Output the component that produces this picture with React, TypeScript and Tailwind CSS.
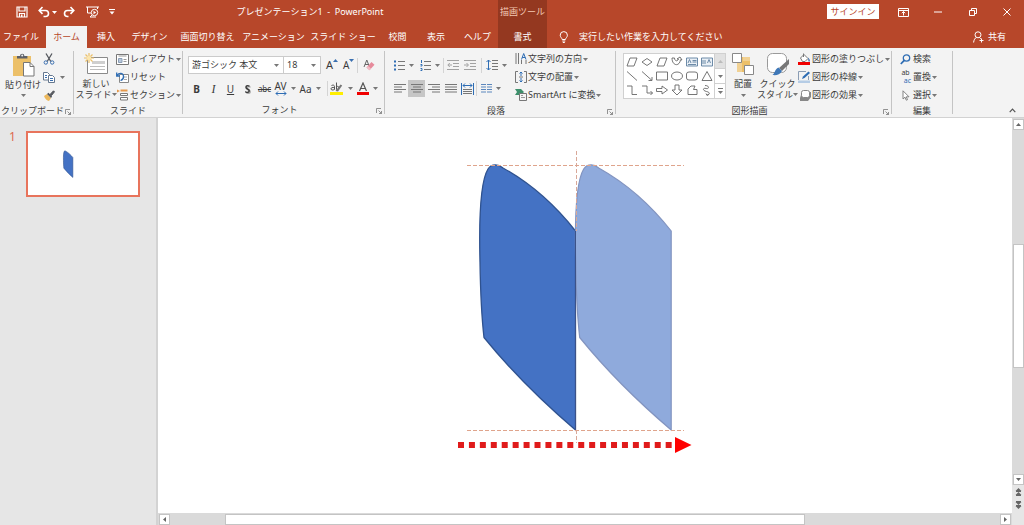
import React from "react";

type Kids = { children: React.ReactNode };

const Caret = ({ className = "" }: { className?: string }) => (
  <svg width="5" height="3" viewBox="0 0 5 3" className={`shrink-0 ${className}`} aria-hidden="true">
    <path d="M0 0h5L2.5 3z" fill="currentColor" />
  </svg>
);

function Icon({ w, h, children, className = "" }: Kids & { w: number; h: number; className?: string }) {
  return (
    <svg width={w} height={h} viewBox={`0 0 ${w} ${h}`} fill="none" className={`shrink-0 ${className}`} aria-hidden="true">
      {children}
    </svg>
  );
}

function Group({ label, width, launcher, children }: Kids & { label: string; width: string; launcher?: boolean }) {
  return (
    <section aria-label={label} className={`flex h-full shrink-0 ${width}`}>
      <div className="flex min-w-0 flex-1 flex-col">
        <div className="flex h-14 pt-[2px]">{children}</div>
        <div className="flex h-[14px] items-center">
          <span className="flex-1 text-center whitespace-nowrap">{label}</span>
          {launcher && (
            <button type="button" aria-label={`${label}の設定`} className="w-2 pt-[2px]">
              <Icon w={6} h={6}>
                <path d="M.5 5V.5H5M2.5 2.5l3 3M5.5 3v2.5H3" stroke="#777" strokeWidth=".8" />
              </Icon>
            </button>
          )}
        </div>
      </div>
      <div className="my-[3px] w-px bg-[#c4c4c4]" />
    </section>
  );
}

function SmallButton({ icon, text, caret }: { icon: React.ReactNode; text: string; caret?: boolean }) {
  return (
    <button type="button" className="flex h-[18px] items-center gap-px whitespace-nowrap">
      <span className="flex w-[13px] justify-center">{icon}</span>
      <span>{text}</span>
      {caret && <Caret className="text-[#777]" />}
    </button>
  );
}

function Tool({ label, width = "w-[17px]", caret, active, children }: Kids & { label: string; width?: string; caret?: boolean; active?: boolean }) {
  return (
    <button
      type="button"
      aria-label={label}
      className={`flex h-[17px] shrink-0 items-center justify-center ${caret ? "gap-1" : ""} ${width} ${active ? "bg-[#c6c6c6]" : ""}`}
    >
      {children}
      {caret && <Caret className="text-[#777]" />}
    </button>
  );
}

const Divider = () => <span className="h-[15px] w-px shrink-0 bg-[#d4d4d4]" />;

const Lines = ({ d }: { d: string }) => (
  <Icon w={12} h={9}>
    <path d={d} stroke="#777" />
  </Icon>
);

const tabs = [
  { text: "ファイル", width: "w-[42px] mr-1" },
  { text: "ホーム", width: "w-[41px]", active: true },
  { text: "挿入", width: "w-[38px]" },
  { text: "デザイン", width: "w-[49px]" },
  { text: "画面切り替え", width: "w-[67px]" },
  { text: "アニメーション", width: "w-[65px]" },
  { text: "スライド ショー", width: "w-[74px]" },
  { text: "校閲", width: "w-[35px]" },
  { text: "表示", width: "w-[42px]" },
  { text: "ヘルプ", width: "w-[41px]" },
];

function Header() {
  return (
    <header className="shrink-0 bg-[#b7472a] text-white">
      <div className="flex h-6">
        <div className="flex w-[498px] shrink-0 items-center">
          <div className="flex w-[122px] items-center pl-4">
            <button type="button" aria-label="上書き保存" className="w-[22px]">
              <Icon w={12} h={12}>
                <path d="M1 1h10v10H1zM3 1.5v3.5h6V1.5M3.5 11V7.5h5V11" stroke="#fff" strokeWidth="1.2" />
                <path d="M5 8.5h1.5V11H5z" fill="#fff" />
              </Icon>
            </button>
            <button type="button" aria-label="元に戻す" className="flex w-[25px] items-center gap-[2px]">
              <Icon w={12} h={12}>
                <path d="M1.5 4.5h6a3 3 0 0 1 0 6H5.5M4.5 1 1.2 4.5l3.3 3.4" stroke="#fff" strokeWidth="1.6" />
              </Icon>
              <Caret />
            </button>
            <button type="button" aria-label="やり直し" className="w-[23px]">
              <Icon w={12} h={12}>
                <path d="M10.5 4.5h-6a3 3 0 0 0 0 6h1M7.5 1l3.3 3.5-3.3 3.4" stroke="#fff" strokeWidth="1.6" />
              </Icon>
            </button>
            <button type="button" aria-label="先頭から開始" className="w-[23px]">
              <Icon w={13} h={12}>
                <path d="M0 1h13M1.5 1v6H5M4 11l2-2M11.500 1v2" stroke="#fff" />
                <circle cx="8.500" cy="6.500" r="3.200" stroke="#fff" />
                <path d="M7.500 4.800v3.400l2.600-1.700zM4 11.500h6v-1H4z" fill="#fff" />
              </Icon>
            </button>
            <button type="button" aria-label="クイック アクセスのカスタマイズ">
              <Icon w={6} h={6}>
                <path d="M0 .5h6" stroke="#fff" />
                <path d="M.5 2.500h5L3 5.500z" fill="#fff" />
              </Icon>
            </button>
          </div>
          <h1 className="flex-1 whitespace-pre text-center">プレゼンテーション1  -  PowerPoint</h1>
        </div>
        <div className="flex w-[49px] shrink-0 items-center justify-center bg-[#943820] text-[#f3c9b4]">描画ツール</div>
        <div className="flex-1" />
        <button type="button" className="mt-1 mr-[7px] h-[15px] w-[52px] bg-white text-[#b7472a]">サインイン</button>
        <button type="button" aria-label="リボンの表示オプション" className="flex w-[35px] items-center justify-center">
          <Icon w={11} h={9}>
            <path d="M.5.5h10v8H.5zM.5 2.500h10M5.500 7.500v-4M3.800 5.200l1.700-1.700 1.700 1.700" stroke="#fff" />
          </Icon>
        </button>
        <button type="button" aria-label="最小化" className="flex w-[34px] items-center justify-center">
          <Icon w={8} h={2}><path d="M0 1h8" stroke="#fff" /></Icon>
        </button>
        <button type="button" aria-label="元のサイズに戻す" className="flex w-[35px] items-center justify-center">
          <Icon w={8} h={8}><path d="M.5 2.500h5v5h-5zM2.500 2.500v-2h5v5h-2" stroke="#fff" /></Icon>
        </button>
        <button type="button" aria-label="閉じる" className="flex w-[34px] items-center justify-center">
          <Icon w={8} h={8}><path d="M.5.5l7 7M7.500.5l-7 7" stroke="#fff" /></Icon>
        </button>
      </div>
      <div className="flex h-6">
        <nav className="flex shrink-0" aria-label="リボン タブ">
          {tabs.map((t) => (
            <button
              key={t.text}
              type="button"
              className={`mt-[2px] shrink-0 whitespace-nowrap ${t.width} ${t.active ? "bg-[#f3f3f3] text-[#b7472a]" : ""}`}
            >
              {t.text}
            </button>
          ))}
          <button type="button" className="w-[49px] bg-[#943820] pt-[2px]">書式</button>
        </nav>
        <label className="flex items-center pt-[2px] pl-3">
          <Icon w={10} h={12}>
            <path d="M3.200 8.500C3 7 1.200 6.200 1.200 4.200a3.600 3.600 0 0 1 7.200 0c0 2-1.800 2.800-2 4.300zM3.300 10h3M3.800 11.500h2" stroke="#fff" />
          </Icon>
          <input
            aria-label="操作アシスト"
            placeholder="実行したい作業を入力してください"
            className="ml-[10px] w-[160px] bg-transparent outline-none placeholder:text-white placeholder:opacity-100"
          />
        </label>
        <div className="flex-1" />
        <button type="button" className="mr-[18px] flex items-center gap-1 pt-[2px]">
          <Icon w={11} h={12}>
            <circle cx="5" cy="3.800" r="3" stroke="#fff" />
            <path d="M.6 11.500c.2-2.500 1.400-4.500 3-5.200M6.300 6.300l1.500 1.500M8.500 7.500v4M6.500 9.500h4" stroke="#fff" />
          </Icon>
          共有
        </button>
      </div>
    </header>
  );
}

function ClipboardGroup() {
  return (
    <Group label="クリップボード" width="w-[74px]" launcher>
      <button type="button" className="ml-1 flex w-[38px] flex-col items-center pt-[3px] whitespace-nowrap">
        <Icon w={24} h={25}>
          <path d="M2 3h18v20H2z" fill="#ecc069" />
          <path d="M6 5.500V3h3a2.200 2.200 0 0 1 4.400 0h3v2.500z" fill="#5c5f66" />
          <circle cx="11.200" cy="2.600" r="1" fill="#f3f3f3" />
          <path d="M12.500 9.500h6.500l4 4v9.500H12.500z" fill="#fff" stroke="#777" />
          <path d="M19 9.500v4h4" stroke="#777" />
        </Icon>
        <span className="leading-[13px]">貼り付け</span>
        <Caret className="mt-[3px] text-[#777]" />
      </button>
      <div className="flex flex-col pl-[1px]">
        <button type="button" aria-label="切り取り" className="flex h-[18px] items-center">
          <Icon w={12} h={12}>
            <path d="M3 .5l4.800 8M9 .5L4.200 8.500" stroke="#55585e" strokeWidth="1.300" />
            <circle cx="2.800" cy="9.500" r="1.700" stroke="#3a6fb0" />
            <circle cx="9.200" cy="9.500" r="1.700" stroke="#3a6fb0" />
          </Icon>
        </button>
        <button type="button" aria-label="コピー" className="flex h-[18px] items-center gap-[5px]">
          <Icon w={12} h={11}>
            <path d="M.5.500h4l2 2v5.500h-6z" fill="#fff" stroke="#66788f" />
            <path d="M5.500 3.500h4l2 2v5h-6z" fill="#fff" stroke="#66788f" />
            <path d="M2 3.500h2M2 5.500h2M7 6.500h3M7 8.500h3" stroke="#3a6fb0" />
          </Icon>
          <Caret className="text-[#777]" />
        </button>
        <button type="button" aria-label="書式のコピー/貼り付け" className="flex h-[18px] items-center">
          <Icon w={12} h={11}>
            <path d="M1 6l3-2 4 4-2 3C4 10.500 2 9 1 6z" fill="#ecb85c" />
            <path d="M4 4l1.500-1.200 3.600 3.600L8 8z" fill="#55585e" />
            <path d="M7 4.500L10.500.800l1 1L8.500 5.500z" fill="#55585e" stroke="#55585e" />
          </Icon>
        </button>
      </div>
    </Group>
  );
}

function SlidesGroup() {
  return (
    <Group label="スライド" width="w-[109px]">
      <button type="button" className="ml-[2px] flex w-[40px] shrink-0 flex-col items-center pt-[3px] whitespace-nowrap">
        <Icon w={25} h={22}>
          <path d="M3.500 4.500h20v16h-20z" fill="#fff" stroke="#8a8a8a" />
          <path d="M8 8h13v3H8z" fill="#cfcfcf" />
          <path d="M6 13.500h15M6 16.500h15" stroke="#bdbdbd" />
          <path d="M5 0v10M0 5h10M1.500 1.500l7 7M8.500 1.500l-7 7" stroke="#ecc069" strokeWidth="1.200" />
          <circle cx="5" cy="5" r="2.200" fill="#fbe6ae" />
        </Icon>
        <span className="mt-[3px] leading-[11px]">新しい</span>
        <span className="flex items-center leading-[11px]">スライド<Caret className="text-[#777]" /></span>
      </button>
      <div className="flex flex-col">
        <SmallButton
          caret
          text="レイアウト"
          icon={
            <Icon w={13} h={11}>
              <path d="M.5.5h12v10H.5z" fill="#fff" stroke="#777" />
              <path d="M2.500 2h8M7.500 5.500h3M7.500 7.500h3" stroke="#999" />
              <path d="M2.500 4.500h3.500v4H2.500z" fill="#b9c9dc" stroke="#8a9db5" />
            </Icon>
          }
        />
        <SmallButton
          text="リセット"
          icon={
            <Icon w={13} h={11}>
              <path d="M3.500 2.500h9v8h-9z" fill="#fff" stroke="#888" />
              <path d="M8 5h3M8 7.500h3" stroke="#aaa" />
              <path d="M1 3.500C3 .500 7 .500 7.500 4S5.500 8 4.500 8.500M.700.500v3.500H4" stroke="#2e6db4" strokeWidth="1.300" />
            </Icon>
          }
        />
        <SmallButton
          caret
          text="セクション"
          icon={
            <Icon w={13} h={12}>
              <path d="M4.500 1.500h7" stroke="#e5984a" strokeWidth="2" />
              <path d="M4.500 4.500h7v2h-7zM4.500 8.500h7v2.500h-7z" fill="#fff" stroke="#777" />
              <path d="M1 .500l3 1.500-3 1.500z" fill="#e5984a" />
            </Icon>
          }
        />
      </div>
    </Group>
  );
}

function FontGroup() {
  return (
    <Group label="フォント" width="w-[202px]" launcher>
      <div className="flex flex-col gap-[6px] pt-[6px] pl-[5px]">
        <div className="flex h-[18px] items-center">
          <div className="grid items-center border border-[#cbcbcb] bg-white">
            <select aria-label="フォント名" className="col-start-1 row-start-1 h-4 w-[94px] appearance-none pl-[3px] outline-none">
              <option>游ゴシック 本文</option>
            </select>
            <Caret className="pointer-events-none col-start-1 row-start-1 mr-1 justify-self-end text-[#777]" />
          </div>
          <div className="grid items-center border border-l-0 border-[#cbcbcb] bg-white">
            <select aria-label="フォント サイズ" className="col-start-1 row-start-1 h-4 w-9 appearance-none pl-[3px] outline-none">
              <option>18</option>
            </select>
            <Caret className="pointer-events-none col-start-1 row-start-1 mr-1 justify-self-end text-[#777]" />
          </div>
          <button type="button" aria-label="フォント サイズの拡大" className="ml-[5px] flex w-[17px] text-[11px] leading-4">
            A<Caret className="mt-[2px] rotate-180 text-[#3a6fb0]" />
          </button>
          <button type="button" aria-label="フォント サイズの縮小" className="flex w-[14px] text-[10px] leading-4">
            A<Caret className="mt-[2px] text-[#3a6fb0]" />
          </button>
          <Divider />
          <Tool label="すべての書式をクリア" width="w-[22px]">
            <Icon w={12} h={13}>
              <path d="M1 8L3.800 1 6.500 8M2 5.500h3.600" stroke="#666" />
              <path d="M3.500 8.500L8.500 3l3 2.700-5 5.500z" fill="#e68a9b" />
              <path d="M3.500 8.500l1.500-1.600 3 2.700-1.500 1.600z" fill="#f2bcc5" />
            </Icon>
          </Tool>
        </div>
        <div className="flex h-[17px] items-center text-[10px]">
          <Tool label="太字"><b>B</b></Tool>
          <Tool label="斜体"><i className="font-['Liberation_Serif',serif] text-[12px]">I</i></Tool>
          <Tool label="下線"><span className="underline">U</span></Tool>
          <Tool label="文字の影"><b className="drop-shadow-[1px_1px_0px_#aaa]">S</b></Tool>
          <Tool label="取り消し線"><span className="text-[8px] line-through">abc</span></Tool>
          <Tool label="文字の間隔" width="w-[24px]" caret>
            <span className="flex flex-col items-center">
              <span className="leading-[10px]">AV</span>
              <Icon w={12} h={5}>
                <path d="M1 2.500h10M3 .500l-2 2 2 2M9 .500l2 2-2 2" stroke="#2e6db4" />
              </Icon>
            </span>
          </Tool>
          <Tool label="文字種の変換" width="w-[26px]" caret>Aa</Tool>
          <span className="w-1" />
          <Divider />
          <Tool label="蛍光ペンの色" width="w-[27px]" caret>
            <Icon w={14} h={13}>
              <path d="M0 10h13v3H0z" fill="#ffee00" />
              <path d="M1.500 3.500c2-1 3 0 3 1v3c-2 1-3.500.500-3.500-.700s1.500-1.500 3.500-1.300M6.500.500v7c3 .500 3.500-4 0-3" stroke="#555" />
              <path d="M5.500 9l5-6.500 1.700 1L8 9.500z" fill="#777" />
            </Icon>
          </Tool>
          <Tool label="フォントの色" width="w-[25px]" caret>
            <Icon w={12} h={13}>
              <path d="M0 10h12v3H0z" fill="#f00000" />
              <path d="M2.500 9L6 1l3.500 8M4 6.500h4" stroke="#555" strokeWidth="1.200" />
            </Icon>
          </Tool>
        </div>
      </div>
    </Group>
  );
}

function ParagraphGroup() {
  return (
    <Group label="段落" width="w-[231px]" launcher>
      <div className="flex w-[129px] shrink-0 flex-col gap-[6px] pt-[6px] pl-[6px]">
        <div className="flex h-[18px] items-center">
          <Tool label="箇条書き" width="w-[26px]" caret>
            <Icon w={11} h={11}>
              <path d="M4 1.500h7M4 5.500h7M4 9.500h7" stroke="#777" />
              <path d="M0 .500h2v2H0zM0 4.500h2v2H0zM0 8.500h2v2H0z" fill="#2e6db4" />
            </Icon>
          </Tool>
          <Tool label="段落番号" width="w-[26px]" caret>
            <Icon w={11} h={11}>
              <path d="M4 1.500h7M4 5.500h7M4 9.500h7" stroke="#777" />
              <path d="M1.500 0v3M.500 4.500h1.500v1.500H.500M.500 8.500h1.500v2H.500" stroke="#2e6db4" />
            </Icon>
          </Tool>
          <Divider />
          <Tool label="インデントを減らす">
            <Icon w={12} h={10}>
              <path d="M0 .500h12M6 3.500h6M6 6.500h6M0 9.500h12M5 5H1M2.800 3L.800 5l2 2" stroke="#a2a2a2" />
            </Icon>
          </Tool>
          <Tool label="インデントを増やす">
            <Icon w={12} h={10}>
              <path d="M0 .500h12M6 3.500h6M6 6.500h6M0 9.500h12M0 5h4M2.500 3l2 2-2 2" stroke="#a2a2a2" />
            </Icon>
          </Tool>
          <span className="w-[3px]" />
          <Divider />
          <Tool label="行間" width="w-[28px]" caret>
            <Icon w={12} h={12}>
              <path d="M2.500 1v10M.500 3l2-2 2 2M.500 9l2 2 2-2" stroke="#2e6db4" />
              <path d="M6 1.500h6M6 4.500h6M6 7.500h6M6 10.500h6" stroke="#777" />
            </Icon>
          </Tool>
        </div>
        <div className="flex h-[17px] items-center">
          <Tool label="左揃え"><Lines d="M0 .500h12M0 3h8M0 5.500h12M0 8h8" /></Tool>
          <Tool label="中央揃え" active><Lines d="M0 .500h12M2 3h8M0 5.500h12M2 8h8" /></Tool>
          <Tool label="右揃え"><Lines d="M0 .500h12M4 3h8M0 5.500h12M4 8h8" /></Tool>
          <Tool label="両端揃え"><Lines d="M0 .500h12M0 3h12M0 5.500h12M0 8h12" /></Tool>
          <Tool label="均等割り付け">
            <Icon w={13} h={12}>
              <path d="M.500 0v12M12.500 0v12M2 2.500h9M4 .500l-2 2 2 2M9 .500l2 2-2 2" stroke="#2e6db4" />
              <path d="M2 6.500h9M2 8.500h9M2 10.500h9" stroke="#777" />
            </Icon>
          </Tool>
          <Divider />
          <Tool label="段の追加または削除" width="w-[28px]" caret>
            <Icon w={11} h={9}>
              <path d="M0 .500h5M0 3h5M0 5.500h5M0 8h5M6 .500h5M6 3h5M6 5.500h5M6 8h5" stroke="#5b87bd" />
            </Icon>
          </Tool>
        </div>
      </div>
      <div className="flex flex-col">
        <SmallButton
          caret
          text="文字列の方向"
          icon={
            <Icon w={12} h={12}>
              <path d="M1 0v11M3.500 0v11M6.500 7v4M11 7v4" stroke="#777" />
              <path d="M6.500 6.500L8.700.500l2.300 6M7.200 4.500h3" stroke="#2e6db4" />
            </Icon>
          }
        />
        <SmallButton
          caret
          text="文字の配置"
          icon={
            <Icon w={12} h={12}>
              <path d="M3 .500H.500v11H3M9 .500h2.500v11H9" stroke="#777" />
              <path d="M6 1v4M6 7v4M4.500 2.500L6 1l1.500 1.500M4.500 9.500L6 11l1.500-1.500" stroke="#2e6db4" />
              <path d="M4 6h4" stroke="#777" />
            </Icon>
          }
        />
        <SmallButton
          caret
          text="SmartArt に変換"
          icon={
            <Icon w={12} h={12}>
              <path d="M0 0h6l3 3-3 3H3L0 6l2-3z" fill="#3d8f6b" />
              <path d="M4.500 4.500h7v7h-7z" fill="#f5f5f5" stroke="#777" />
              <path d="M6 6.500h2M6 8.500h4" stroke="#999" />
            </Icon>
          }
        />
      </div>
    </Group>
  );
}

const shapes = [
  { name: "平行四辺形", d: "M1 10L4 2h7L8 10z" },
  { name: "ひし形", d: "M1 6l5-3.500L11 6 6 9.500z" },
  { name: "データ", d: "M1 10L4 2h7L8 10z" },
  { name: "下カーブ矢印", d: "M1 2h2.500c0 3 3 4 4 1L6 3l3-2 2 3-1.500-.200C8.500 11 1 10 1 2z" },
  { name: "テキスト ボックス", d: "M.500 2h11v8H.500zM2 7l1.500-3.500L5 7M6.500 4.500h4M6.500 6h4M2 8.500h8", tint: true },
  { name: "縦書きテキスト ボックス", d: "M.500 2h11v8H.500zM6.500 7L8 3.500 9.500 7M2 4v4M4 4v4", tint: true },
  { name: "直線", d: "M1 1.500l10 9" },
  { name: "直線矢印", d: "M1 1.500l10 9M11 7v3.500H7.500" },
  { name: "四角形", d: "M.500 2h11v8H.500z" },
  { name: "楕円", d: "M6 2c3 0 5.500 1.500 5.500 4S9 10 6 10 .500 8.500.500 6 3 2 6 2z" },
  { name: "角丸四角形", d: "M3 2h6q2.500 0 2.500 2v4q0 2-2.500 2H3Q.500 10 .500 8V4Q.500 2 3 2z" },
  { name: "三角形", d: "M6 1.500L11 10.500H1z" },
  { name: "カギ線コネクタ", d: "M1 2h5v8.500h5" },
  { name: "カギ線矢印コネクタ", d: "M1 2h5v7h5.500M9.500 7l2 2-2 2" },
  { name: "右矢印", d: "M.500 4.500h5.500V2l5.500 4L6 10V7.500H.500z" },
  { name: "下矢印", d: "M4 1h4v5h3l-5 5-5-5h3z" },
  { name: "フリーフォーム", d: "M2 10.500V5L5 2h4L7.500 5.500H11v5z" },
  { name: "曲線", d: "M4 1.500c5 0 4 4 1 3s-4 2 .500 3 3 3.500.500 3.500M5 9.500l1 2 2-1.500" },
];

function DrawingGroup() {
  return (
    <Group label="図形描画" width="w-[276px]" launcher>
      <div className="mt-[3px] ml-[7px] flex h-[46px] shrink-0 border border-[#d0d0d0] bg-white">
        <div className="grid grid-cols-6 content-center">
          {shapes.map((s) => (
            <button key={s.name} type="button" aria-label={s.name} className="flex h-[14px] w-[15px] items-center justify-center">
              <Icon w={12} h={12}>
                <path d={s.d} stroke={s.tint ? "#5f7f9f" : "#666"} fill={s.tint ? "#eaf0f6" : "none"} strokeWidth=".9" />
              </Icon>
            </button>
          ))}
        </div>
        <div className="flex w-[11px] flex-col divide-y divide-[#d0d0d0] border-l border-[#d0d0d0]">
          <button type="button" aria-label="前の行" className="flex flex-1 items-center justify-center bg-[#e1e1e1]"><Caret className="rotate-180 text-[#bbb]" /></button>
          <button type="button" aria-label="次の行" className="flex flex-1 items-center justify-center"><Caret className="text-[#777]" /></button>
          <button type="button" aria-label="その他" className="flex flex-1 flex-col items-center justify-center gap-[2px]"><span className="h-px w-[5px] bg-[#777]" /><Caret className="text-[#777]" /></button>
        </div>
      </div>
      <button type="button" className="ml-[3px] flex w-[28px] shrink-0 flex-col items-center pt-[3px]">
        <Icon w={22} h={22}>
          <path d="M5 4h13v15H5z" fill="#ecc069" />
          <path d="M5 10h5v9H5zM11 4h7v4h-7z" fill="#f1d193" />
          <path d="M.5.5h9v9h-9zM12.500 12.500h9v9h-9z" fill="#fff" stroke="#888" />
        </Icon>
        <span className="mt-[2px] leading-[13px]">配置</span>
        <Caret className="mt-[4px] text-[#777]" />
      </button>
      <button type="button" className="flex w-[41px] shrink-0 flex-col items-center pt-[3px] whitespace-nowrap">
        <Icon w={24} h={23}>
          <rect x="1.500" y=".5" width="19" height="19" rx="5" fill="#fff" stroke="#9a9a9a" />
          <path d="M23 6v5l-7 7-3-3z" fill="#777" />
          <path d="M12.500 14.500l3.500 3.500c-2 4-6 4.500-9.500 4 2.500-1.500 2-5.500 6-7.500z" fill="#3f78b8" />
        </Icon>
        <span className="mt-[2px] leading-[11px]">クイック</span>
        <span className="flex items-center leading-[11px]">スタイル<Caret className="text-[#777]" /></span>
      </button>
      <div className="flex flex-col">
        <SmallButton
          caret
          text="図形の塗りつぶし"
          icon={
            <Icon w={13} h={12}>
              <path d="M0 9h12v3H0z" fill="#f00000" />
              <path d="M2.500 5L6 1.500l4 4L7 8.500H4.500z" fill="#fff" stroke="#777" />
              <path d="M5.500.500v3.500" stroke="#777" />
              <path d="M10 4.500q2 1.500 2 4h-1.500z" fill="#3a6fb0" />
            </Icon>
          }
        />
        <SmallButton
          caret
          text="図形の枠線"
          icon={
            <Icon w={13} h={12}>
              <path d="M10.500 5v4M8 .500H.500V9" stroke="#8b9db4" />
              <path d="M0 9.500h12V12H0z" fill="#b5cce5" />
              <path d="M4 8l1-2.500L10.500.500l1.500 1.500L6.500 7z" fill="#2e6db4" />
            </Icon>
          }
        />
        <SmallButton
          caret
          text="図形の効果"
          icon={
            <Icon w={12} h={11}>
              <path d="M3 2h9v5l-3 4H1V8z" fill="#888" />
              <rect x="2.500" y=".5" width="8" height="7" rx="2" fill="#fff" stroke="#888" />
            </Icon>
          }
        />
      </div>
    </Group>
  );
}

function EditingGroup() {
  return (
    <Group label="編集" width="w-[61px]">
      <div className="flex flex-col pl-[7px]">
        <SmallButton
          text="検索"
          icon={
            <Icon w={11} h={11}>
              <circle cx="6.500" cy="4" r="3.200" stroke="#2e6db4" strokeWidth="1.300" />
              <path d="M4.200 6.300L.800 10" stroke="#2e6db4" strokeWidth="1.700" />
            </Icon>
          }
        />
        <SmallButton
          caret
          text="置換"
          icon={
            <span className="flex flex-col text-[7px] leading-[8px]">
              <span>ab</span>
              <span className="pl-1 text-[#2e6db4]">ac</span>
            </span>
          }
        />
        <SmallButton
          caret
          text="選択"
          icon={
            <Icon w={8} h={11}>
              <path d="M1 .800v8.200l2-1.800 1.300 3 1.200-.500-1.200-2.900H7z" fill="#fff" stroke="#777" strokeWidth=".9" />
            </Icon>
          }
        />
      </div>
    </Group>
  );
}

const leafPath =
  "M575.5 231C555 205 530 183 503 168C499 164.500 492 163 488 169C480 182 479 222 480 262C480.500 295 482 320 484 337.500C512 372 545 404 575.500 430Z";

function SlideCanvas() {
  return (
    <main className="relative min-h-0 flex-1 overflow-hidden bg-white">
      <svg
        role="img"
        aria-label="右方向に複製した図形"
        viewBox="455 150 240 305"
        className="absolute top-8 left-[297px] h-[305px] w-[240px]"
        fill="none"
      >
        <path d={leafPath} fill="#4472c4" stroke="#2f528f" strokeWidth="1.300" />
        <path d={leafPath} transform="translate(95.700 0)" fill="#8faadc" stroke="#8294c0" strokeWidth="1.200" />
        <path d="M467 165.500h217M467 430.500h217" stroke="#dfa48c" strokeDasharray="4 2" />
        <path d="M576.500 151v80M576.500 430v13" stroke="#d9a898" strokeDasharray="4 2" />
        <path d="M575.500 231v199" stroke="#3c5288" />
        <path d="M458 445h214" stroke="#e01b1b" strokeWidth="6" strokeDasharray="6 4.930" />
        <path d="M675 437l16.500 8-16.500 8z" fill="#ff0000" />
      </svg>
    </main>
  );
}

const ScrollButton = ({ label, turn }: { label: string; turn: string }) => (
  <button type="button" aria-label={label} className="flex size-[11px] shrink-0 items-center justify-center border border-[#c4c4c4] bg-white">
    <Caret className={`text-[#666] ${turn}`} />
  </button>
);

const DoubleArrow = ({ label, turn }: { label: string; turn: string }) => (
  <button type="button" aria-label={label} className="flex h-[13px] items-center justify-center">
    <Icon w={7} h={8} className={turn}>
      <path d="M3.500 0L6.500 3h-6zM3.500 4L6.500 7h-6z" fill="#666" />
      <path d="M1 3.500h5M1 7.500h5" stroke="#666" />
    </Icon>
  </button>
);

export default function App() {
  return (
    <div
      lang="ja"
      className="flex h-screen flex-col overflow-hidden bg-[#e6e6e6] font-['Noto_Sans','Noto_Sans_CJK_JP',sans-serif] text-[9px] leading-3 text-[#3b3b3b]"
    >
      <Header />
      <div className="flex h-[70px] shrink-0 border-b border-[#d2d2d2] bg-[#f3f3f3]">
        <ClipboardGroup />
        <SlidesGroup />
        <FontGroup />
        <ParagraphGroup />
        <DrawingGroup />
        <EditingGroup />
        <div className="flex flex-1 items-end justify-end pr-2 pb-1">
          <button type="button" aria-label="リボンを折りたたむ">
            <Icon w={7} h={5}><path d="M.700 4.200L3.500 1.200l2.800 3" stroke="#555" strokeWidth="1.200" /></Icon>
          </button>
        </div>
      </div>
      <div className="flex min-h-0 flex-1">
        <aside className="flex w-[158px] shrink-0 items-start gap-[10px] border-r-2 border-[#d3d3d3] pt-[13px] pl-[9px]">
          <span className="w-[7px] text-[12px] leading-[12px] text-[#dd6b50]">1</span>
          <button type="button" aria-label="スライド 1" className="h-[66px] w-[114px] border-2 border-[#e8745c] bg-white">
            <svg viewBox="455 40 1120 620" className="h-full w-full" preserveAspectRatio="none" aria-hidden="true">
              <path d={leafPath} transform="translate(336 54)" fill="#4472c4" stroke="#2f528f" strokeWidth="6" />
            </svg>
          </button>
        </aside>
        <div className="flex min-w-0 flex-1 flex-col">
          <SlideCanvas />
          <div className="flex h-3 shrink-0 items-center bg-[#dadada] px-[1px]">
            <ScrollButton label="左へスクロール" turn="rotate-90" />
            <span className="grow-[55] basis-0" />
            <span className="h-[11px] grow-[578] basis-0 border border-[#c4c4c4] bg-white" />
            <span className="grow-[195] basis-0" />
            <ScrollButton label="右へスクロール" turn="-rotate-90" />
          </div>
        </div>
        <div className="flex w-3 shrink-0 flex-col">
          <div className="flex min-h-0 flex-1 flex-col items-center bg-[#dadada] pt-[1px]">
            <ScrollButton label="上へスクロール" turn="rotate-180" />
            <span className="grow-[114] basis-0" />
            <span className="w-[11px] grow-[123] basis-0 border border-[#c4c4c4] bg-white" />
            <span className="grow-[106] basis-0" />
            <ScrollButton label="下へスクロール" turn="rotate-0" />
          </div>
          <DoubleArrow label="前のスライド" turn="rotate-0" />
          <DoubleArrow label="次のスライド" turn="rotate-180" />
          <span className="h-[14px]" />
        </div>
      </div>
    </div>
  );
}
